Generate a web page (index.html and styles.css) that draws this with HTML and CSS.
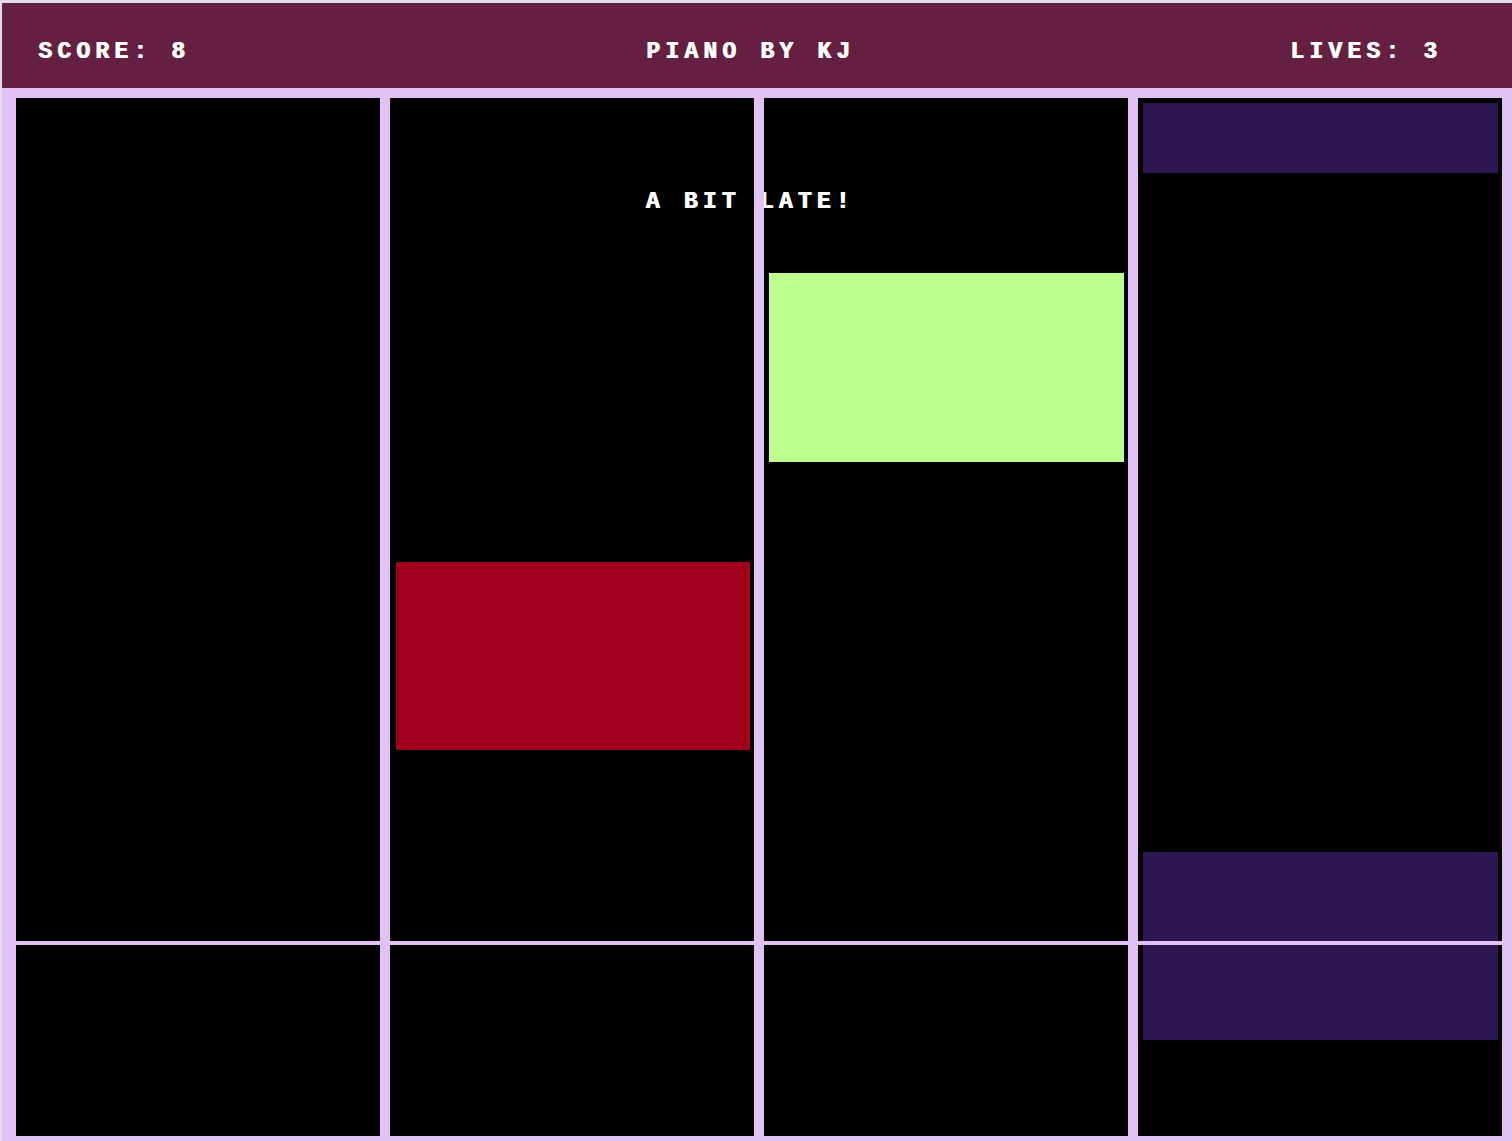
FILE: index.html
```html
<!DOCTYPE html>
<html lang="en">
<head>
<meta charset="utf-8">
<title>Piano by KJ</title>
<link rel="stylesheet" href="styles.css">
</head>
<body>
<div class="screen">
  <header class="hud">
    <div class="hud-score">SCORE: 8</div>
    <div class="hud-title">PIANO BY KJ</div>
    <div class="hud-lives">LIVES: 3</div>
  </header>
  <main class="arena">
    <div class="board">
      <div class="lane"></div>
      <div class="sep"></div>
      <div class="lane">
        <div class="tile tile-red" style="top:464px;height:188px"></div>
      </div>
      <div class="sep"></div>
      <div class="lane">
        <div class="tile tile-green" style="top:175px;height:189px"></div>
      </div>
      <div class="sep"></div>
      <div class="lane">
        <div class="tile tile-purple" style="top:5px;height:70px"></div>
        <div class="tile tile-purple" style="top:754px;height:188px"></div>
      </div>
      <div class="message">A BIT LATE!</div>
      <div class="hitline"></div>
    </div>
  </main>
</div>
</body>
</html>
```
FILE: styles.css
```css
html, body {
  margin: 0;
  padding: 0;
  background: #e6dde6;
}
.screen {
  width: 1512px;
  height: 1141px;
  box-sizing: border-box;
  padding: 3px 0 0 2px;
  display: flex;
  flex-direction: column;
  overflow: hidden;
}
.hud {
  height: 85px;
  flex: none;
  background: #651f40;
  display: grid;
  grid-template-columns: 1fr auto 1fr;
  align-items: center;
  padding: 12px 37px 0 36px;
  box-sizing: border-box;
  color: #ffffff;
  font-family: "Liberation Mono", "DejaVu Sans Mono", monospace;
  font-weight: bold;
  font-size: 23px;
  letter-spacing: 5.2px;
  line-height: 24px;
  text-shadow: 1px 0 0 #ffffff;
}
.hud-score { justify-self: start; }
.hud-title { justify-self: center; margin-right: 12px; }
.hud-lives { justify-self: end; margin-right: 33px; }
.arena {
  flex: 1;
  background: #e2c1f4;
  padding: 10px 10px 5px 14px;
  display: flex;
  min-height: 0;
}
.board {
  flex: 1;
  display: flex;
  position: relative;
}
.lane {
  flex: 1;
  background: #000000;
  position: relative;
  overflow: hidden;
}
.sep {
  width: 10px;
  flex: none;
  background: #e2c1f4;
  position: relative;
  z-index: 2;
}
.tile {
  position: absolute;
  left: 5px;
  right: 4px;
}
.tile-red { background: #a0001b; left: 6px; }
.tile-green { background: #bcff8c; }
.tile-purple { background: #2f1851; }
.message {
  position: absolute;
  z-index: 1;
  top: 92px;
  left: 0;
  right: 0;
  padding-right: 18px;
  text-align: center;
  color: #ffffff;
  font-family: "Liberation Mono", "DejaVu Sans Mono", monospace;
  font-weight: bold;
  font-size: 23px;
  letter-spacing: 5.2px;
  line-height: 24px;
  text-shadow: 1px 0 0 #ffffff;
}
.hitline {
  position: absolute;
  z-index: 3;
  left: 0;
  right: 0;
  top: 843px;
  height: 4px;
  background: #e2c1f4;
}
```
